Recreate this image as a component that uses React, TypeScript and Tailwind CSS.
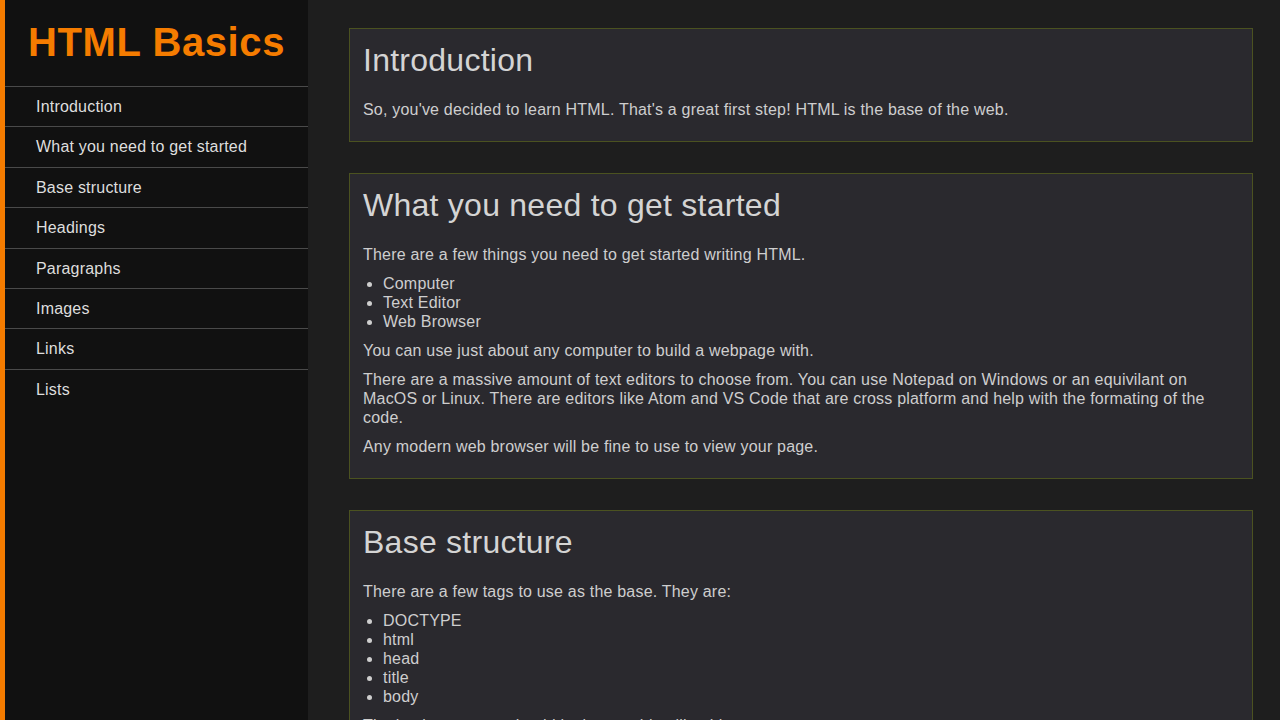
import React from "react";

const navItems = [
  "Introduction",
  "What you need to get started",
  "Base structure",
  "Headings",
  "Paragraphs",
  "Images",
  "Links",
  "Lists",
];

const Section = ({ title, children }: { title: string; children: React.ReactNode }) => (
  <section className="border border-[#4b5220] bg-[#2a292e] px-[13px] pt-[13px] pb-[13px]">
    <h2 className="mb-[21px] text-[32px] leading-[37px] font-normal tracking-[0.25px] text-[#d4d4d4]">{title}</h2>
    <div className="mb-[9px] flex flex-col gap-[10px] text-base leading-[19px] tracking-[0.2px] text-[#cecece]">
      {children}
    </div>
  </section>
);

const List = ({ items }: { items: string[] }) => (
  <ul className="list-disc pl-[20px]">
    {items.map((item) => (
      <li key={item}>{item}</li>
    ))}
  </ul>
);

export default function App() {
  return (
    <div
      className="flex h-screen w-full overflow-hidden bg-[#1e1e1e]"
      style={{ fontFamily: '"Liberation Sans", Arial, sans-serif' }}
    >
      {/* Sidebar */}
      <nav className="flex h-full w-[308px] flex-shrink-0 flex-col border-l-[5px] border-[#f57c00] bg-[#111111]">
        <div className="h-[86px] pt-[19px] text-center">
          <h1 className="text-[40px] leading-[46px] font-bold tracking-[0.6px] text-[#f57c00]">HTML Basics</h1>
        </div>
        <ul>
          {navItems.map((item) => (
            <li
              key={item}
              className="border-t border-[#4a4a4a] py-[10px] pl-[31px] text-base leading-[19.4px] tracking-[0.2px] text-[#dedede]"
            >
              {item}
            </li>
          ))}
        </ul>
      </nav>

      {/* Content */}
      <main className="flex flex-1 flex-col gap-[31px] pt-[28px] pl-[41px] pr-[27px]">
        <Section title="Introduction">
          <p>So, you've decided to learn HTML. That's a great first step! HTML is the base of the web.</p>
        </Section>

        <Section title="What you need to get started">
          <p>There are a few things you need to get started writing HTML.</p>
          <List items={["Computer", "Text Editor", "Web Browser"]} />
          <p>You can use just about any computer to build a webpage with.</p>
          <p>
            There are a massive amount of text editors to choose from. You can use Notepad on Windows or an equivilant on
            MacOS or Linux. There are editors like Atom and VS Code that are cross platform and help with the formating of
            the code.
          </p>
          <p>Any modern web browser will be fine to use to view your page.</p>
        </Section>

        <Section title="Base structure">
          <p>There are a few tags to use as the base. They are:</p>
          <List items={["DOCTYPE", "html", "head", "title", "body"]} />
          <p>The basic structure should look something like this:</p>
          <p>&lt;!DOCTYPE html&gt;</p>
        </Section>
      </main>
    </div>
  );
}
